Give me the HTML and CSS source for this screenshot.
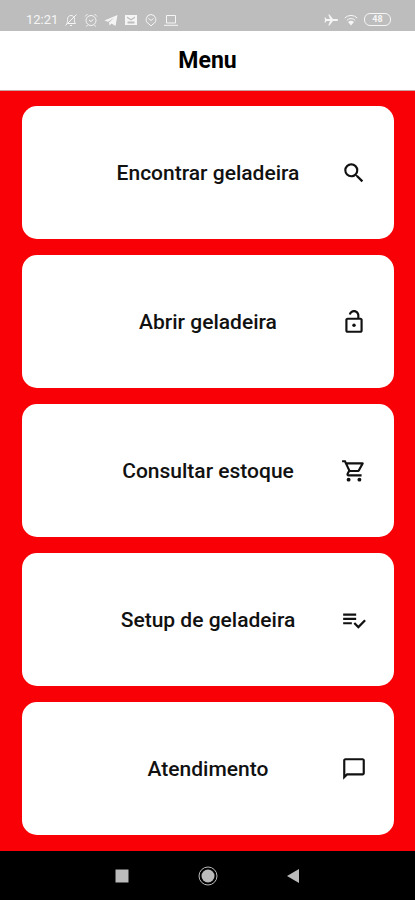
FILE: index.html
```html
<!DOCTYPE html>
<html lang="pt-BR">
<head>
  <meta charset="UTF-8">
  <meta name="viewport" content="width=device-width, initial-scale=1">
  <title>Menu</title>
  <link rel="stylesheet" href="styles.css">
</head>
<body>

  <div class="status-bar">
    <div class="status-group">
      <span class="clock">12:21</span>
      <svg class="status-icon" viewBox="0 0 14 14"><path d="M3 10.500h8.500c-1-1-1-2-1-4C10.500 4 9 2.500 7 2.500S3.500 4 3.500 6.500c0 2 0 3-1 4M6 12.500h2M1.500 12.500l11-11"/></svg>
      <svg class="status-icon" viewBox="0 0 14 14"><circle cx="7" cy="7.500" r="5"/><path d="M1 3.500L3.500 1M13 3.500L10.500 1M5 7l2 1.500L9.500 6.500M3.500 12l-1 1.500M10.500 12l1 1.500"/></svg>
      <svg class="status-icon" viewBox="0 0 14 14"><path class="solid" d="M0.500 7.500L13.500 2 11.500 13 7.500 10.500 5.500 12.500 5 9.500 10.500 4.500 4 8.800z"/></svg>
      <svg class="status-icon" viewBox="0 0 14 14"><path class="solid" fill-rule="evenodd" d="M1 2h12v10H1zM3 3.500l4 2.500 4-2.500v1.500L7 7.500 3 5zM3.500 8.500v2h7v-2z"/></svg>
      <svg class="status-icon" viewBox="0 0 14 14"><path d="M7 1.500a5 5 0 0 1 2 9.500L7 13 5 11A5 5 0 0 1 7 1.500zM4.500 5.500L7 7.500l2.500-2"/></svg>
      <svg class="status-icon" viewBox="0 0 14 14"><path d="M2.500 2.500h9v7.500h-9zM0 12.300h14"/></svg>
    </div>
    <div class="status-group">
      <svg class="status-icon" viewBox="0 0 14 14"><path class="solid" d="M14 7c0-.6-.5-1-1-1H9L5.500 1.500H4.300L6 6H2.500l-1-1.500H.5L1 7l-.5 2.500h1l1-1.500H6l-1.700 4.500h1.200L9 8h4c.5 0 1-.4 1-1z"/></svg>
      <svg class="status-icon" viewBox="0 0 14 14"><path d="M.7 5a9 9 0 0 1 12.600 0M2.800 7.300a6 6 0 0 1 8.400 0"/><path class="solid" d="M7 12.500L4 9a4.500 4.500 0 0 1 6 0z"/></svg>
      <span class="battery">48</span>
    </div>
  </div>

  <header class="header">
    <h1>Menu</h1>
  </header>

  <main class="menu">
    <button class="card" type="button">
      <span class="label">Encontrar geladeira</span>
      <svg class="icon" viewBox="0 0 24 24"><path d="M15.500 14h-.79l-.28-.27A6.471 6.471 0 0 0 16 9.500 6.500 6.500 0 1 0 9.500 16c1.610 0 3.090-.59 4.230-1.570l.27.28v.79l5 4.990L20.490 19l-4.990-5zm-6 0C7.010 14 5 11.990 5 9.500S7.010 5 9.500 5 14 7.010 14 9.500 11.990 14 9.500 14z"/></svg>
    </button>
    <button class="card" type="button">
      <span class="label">Abrir geladeira</span>
      <svg class="icon" viewBox="0 0 24 24"><path d="M18 8h-1V6c0-2.760-2.240-5-5-5-2.280 0-4.270 1.540-4.840 3.750l1.940.5C9.440 3.930 10.630 3 12 3c1.650 0 3 1.350 3 3v2H6c-1.100 0-2 .9-2 2v10c0 1.100.9 2 2 2h12c1.100 0 2-.9 2-2V10c0-1.100-.9-2-2-2zm0 12H6V10h12v10z"/><circle cx="12" cy="15" r="1.600"/></svg>
    </button>
    <button class="card" type="button">
      <span class="label">Consultar estoque</span>
      <svg class="icon" viewBox="0 0 24 24"><path d="M15.550 13c.75 0 1.410-.41 1.750-1.030l3.580-6.490A.996.996 0 0 0 20.010 4H5.210l-.94-2H1v2h2l3.600 7.590-1.350 2.440C4.520 15.370 5.480 17 7 17h12v-2H7l1.100-2h7.450zM6.160 6h12.150l-2.760 5H8.530L6.160 6z"/><circle cx="7" cy="20" r="1.800"/><circle cx="17" cy="20" r="1.800"/></svg>
    </button>
    <button class="card" type="button">
      <span class="label">Setup de geladeira</span>
      <svg class="icon" viewBox="0 0 24 24"><path d="M14 10H2v2h12v-2zm0-4H2v2h12V6zM2 16h8v-2H2v2zm19.500-4.500L23 13l-6.990 7-4.510-4.500L13 14l3.010 3 5.490-5.500z"/></svg>
    </button>
    <button class="card" type="button">
      <span class="label">Atendimento</span>
      <svg class="icon" viewBox="0 0 24 24"><path d="M20 2H4c-1.100 0-2 .9-2 2v18l4-4h14c1.100 0 2-.9 2-2V4c0-1.100-.9-2-2-2zm0 14H5.170L4 17.170V4h16v12z"/></svg>
    </button>
  </main>

  <nav class="nav-bar">
    <button type="button" aria-label="Recentes"><svg viewBox="0 0 20 20"><path d="M3.500 3.500h13v13h-13z"/></svg></button>
    <button type="button" aria-label="Início"><svg viewBox="0 0 20 20"><circle class="ring" cx="10" cy="10" r="9"/><circle cx="10" cy="10" r="6.500"/></svg></button>
    <button type="button" aria-label="Voltar"><svg viewBox="0 0 20 20"><path d="M3 10L15 3v14z"/></svg></button>
  </nav>

</body>
</html>
```
FILE: styles.css
```css
* {
  box-sizing: border-box;
}
body {
  margin: 0;
  min-height: 100vh;
  display: flex;
  flex-direction: column;
  font-family: Roboto, sans-serif;
  background-color: #f90006;
  color: #000;
}
.status-bar {
  display: flex;
  justify-content: space-between;
  align-items: center;
  height: 31px;
  padding: 8px 24px 0 26px;
  background: #bdbdbd;
  color: #f5f5f5;
}
.status-group {
  display: flex;
  align-items: center;
  gap: 6px;
}
.clock {
  font-size: 13px;
}
.status-icon {
  width: 14px;
  height: 14px;
  fill: none;
  stroke: #f5f5f5;
}
.status-icon .solid {
  fill: #f5f5f5;
  stroke: none;
}
.battery {
  width: 27px;
  height: 13px;
  border: 1px solid #f5f5f5;
  border-radius: 6px;
  font-size: 9px;
  font-weight: 700;
  line-height: 11px;
  text-align: center;
}
.header {
  display: flex;
  align-items: center;
  justify-content: center;
  height: 60px;
  background: #fff;
  border-bottom: 1px solid #c9a0a0;
}
h1 {
  margin: 0;
  font-size: 23px;
  font-weight: 700;
}
.menu {
  flex: 1;
  display: flex;
  flex-direction: column;
  gap: 16px;
  padding: 15px 21px 16px 22px;
}
.card {
  flex: 1;
  display: grid;
  grid-template-columns: 26px 1fr 26px;
  align-items: center;
  padding: 0 27px;
  border: none;
  border-radius: 15px;
  background: #fff;
  color: #111;
  font-family: inherit;
  font-size: 21px;
  font-weight: 500;
}
.label {
  grid-column: 2;
}
.icon {
  width: 26px;
  height: 26px;
  fill: #111;
}
.nav-bar {
  display: flex;
  align-items: center;
  justify-content: center;
  gap: 66px;
  height: 49px;
  background: #000;
}
.nav-bar button {
  width: 20px;
  height: 20px;
  padding: 0;
  border: none;
  background: none;
}
.nav-bar svg {
  display: block;
  fill: #bbb;
}
.nav-bar .ring {
  fill: none;
  stroke: #bbb;
}
```
